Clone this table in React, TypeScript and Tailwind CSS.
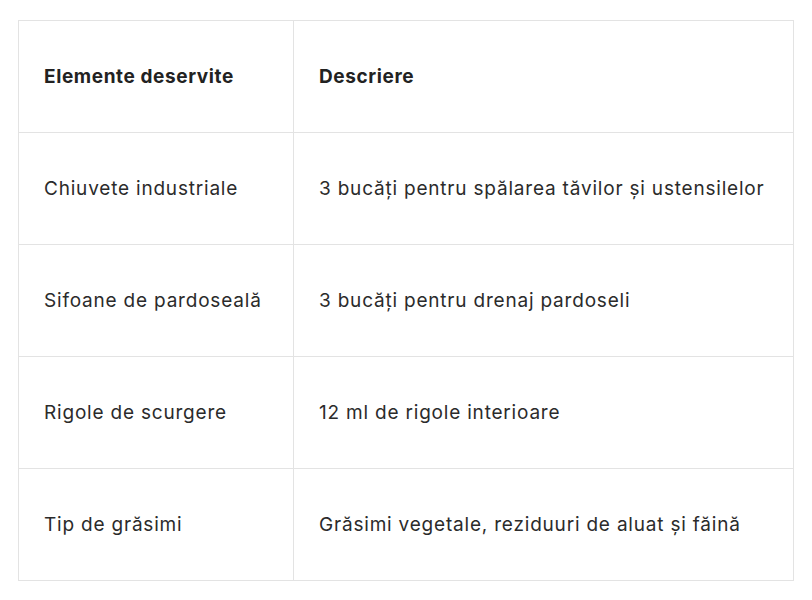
const rows = [
  ['Chiuvete industriale', '3 bucăți pentru spălarea tăvilor și ustensilelor'],
  ['Sifoane de pardoseală', '3 bucăți pentru drenaj pardoseli'],
  ['Rigole de scurgere', '12 ml de rigole interioare'],
  ['Tip de grăsimi', 'Grăsimi vegetale, reziduuri de aluat și făină'],
]

export default function App() {
  return (
    <div className="min-h-[600px] bg-white pt-[20px] pl-[18px] font-['Inter',sans-serif] text-[#2b2b2b]">
      <table className="w-[776px] border-collapse text-[19px] tracking-[0.8px]">
        <thead>
          <tr className="h-[112px]">
            <th className="w-[275px] border border-[#e3e3e3] px-[25px] pt-[2px] text-left font-bold tracking-[0.6px] text-[#222]">
              Elemente deservite
            </th>
            <th className="border border-[#e3e3e3] px-[25px] pt-[2px] text-left font-bold tracking-[0.6px] text-[#222]">
              Descriere
            </th>
          </tr>
        </thead>
        <tbody>
          {rows.map(([name, desc]) => (
            <tr key={name} className="h-[112px]">
              <td className="border border-[#e3e3e3] px-[25px] pt-[2px]">{name}</td>
              <td className="border border-[#e3e3e3] px-[25px] pt-[2px]">{desc}</td>
            </tr>
          ))}
        </tbody>
      </table>
    </div>
  )
}
